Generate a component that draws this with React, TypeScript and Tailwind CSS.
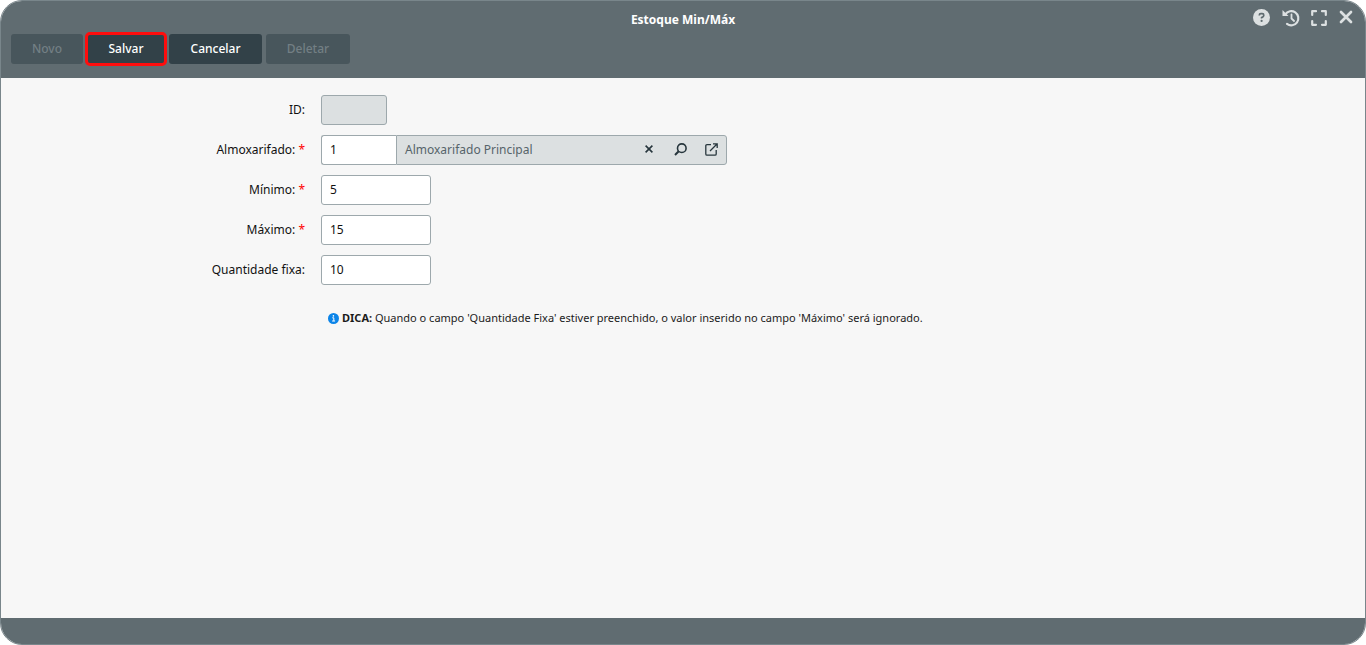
import type { ReactNode } from "react";

function TitleIcon({ label, children }: { label: string; children: ReactNode }) {
  return (
    <button type="button" aria-label={label} className="flex size-5 items-center justify-center text-[#dce0e1]">
      {children}
    </button>
  );
}

const actionBase = "h-[30px] rounded-[3px] text-center text-xs font-medium";
const enabled = "bg-[#324148] text-white";
const disabled = "bg-[#48565c] text-[#737f84]";

function Field({ id, label, required, children }: { id: string; label: string; required?: boolean; children: ReactNode }) {
  return (
    <div className="flex items-center gap-4">
      <label htmlFor={id} className="w-76 shrink-0 text-right text-xs text-[#111111]">
        {label}:{required && <span className="text-[#ff0000]"> *</span>}
      </label>
      {children}
    </div>
  );
}

const inputBase = "h-[30px] border border-[#9da8ac] px-2 pb-0.5 text-xs text-[#111111] outline-none";

export default function App() {
  return (
    <div className="flex min-h-screen flex-col overflow-hidden rounded-[22px] border border-[#79868b] bg-[#f7f7f7] font-['Noto_Sans',sans-serif]">
      <header className="bg-[#606c71] px-[10px] pb-[14px]">
        <div className="grid h-[33px] grid-cols-[1fr_auto_1fr] items-center">
          <h1 className="col-start-2 pt-1 text-xs font-bold text-white">Estoque Min/Máx</h1>
          <div className="flex justify-end gap-2">
            <TitleIcon label="Ajuda">
              <svg viewBox="0 0 17 17" className="size-[17px]">
                <circle cx="8.5" cy="8.5" r="8.5" fill="currentColor" />
                <path d="M6.3 6.5V6.2Q6.3 4.7 7.8 4.7H9.2Q10.8 4.7 10.8 6.3Q10.8 7.3 9.8 7.9L8.6 8.6V9.5" fill="none" stroke="#606c71" strokeWidth="1.7" />
                <circle cx="8.6" cy="11.9" r="1.1" fill="#606c71" />
              </svg>
            </TitleIcon>
            <TitleIcon label="Histórico">
              <svg viewBox="0 0 18 18" className="ml-1 size-[18px] shrink-0" fill="none" stroke="currentColor" strokeWidth="2.2">
                <path d="M3.3 5.3A7.1 7.1 0 1 1 5 14.9" strokeLinecap="round" />
                <path d="M9.5 5.3v4.2l2.6 2.5" strokeWidth="1.8" strokeLinecap="round" />
                <path d="M.5 1v6h6z" fill="currentColor" stroke="none" />
              </svg>
            </TitleIcon>
            <TitleIcon label="Tela cheia">
              <svg viewBox="0 0 16 16" className="ml-1 size-4 shrink-0" fill="none" stroke="currentColor" strokeWidth="2.2">
                <path d="M1.2 5V1.2H5M11 1.2h3.8V5M14.8 11v3.8H11M5 14.8H1.2V11" strokeLinecap="round" strokeLinejoin="round" />
              </svg>
            </TitleIcon>
            <TitleIcon label="Fechar">
              <svg viewBox="0 0 14 14" className="mb-0.5 ml-px size-[14px]" fill="none" stroke="currentColor" strokeWidth="2.7">
                <path d="M2 2l10 10M12 2L2 12" strokeLinecap="round" />
              </svg>
            </TitleIcon>
          </div>
        </div>
        <div className="flex gap-1">
          <button type="button" disabled className={`${actionBase} ${disabled} w-[72px]`}>Novo</button>
          <button type="submit" form="estoque" className={`${actionBase} ${enabled} w-[78px] outline-3 -outline-offset-1 outline-[#ff0d0d]`}>Salvar</button>
          <button type="button" className={`${actionBase} ${enabled} w-[93px]`}>Cancelar</button>
          <button type="button" disabled className={`${actionBase} ${disabled} w-[84px]`}>Deletar</button>
        </div>
      </header>

      <main className="grow py-[17px]">
        <form id="estoque" className="flex flex-col gap-[10px]" onSubmit={(e) => e.preventDefault()}>
          <Field id="codigo" label="ID">
            <input id="codigo" disabled className={`${inputBase} w-[66px] rounded-[3px] bg-[#dce0e1]`} />
          </Field>
          <Field id="almoxarifado" label="Almoxarifado" required>
            <div className="flex">
              <input id="almoxarifado" defaultValue="1" className={`${inputBase} w-[75px] rounded-l-[3px] border-r-0 bg-white`} />
              <div className="flex h-[30px] w-[331px] items-center justify-between rounded-r-[3px] border border-[#9da8ac] bg-[#dce0e1] pr-[7px] pl-2 text-xs text-[#56646a]">
                <span>Almoxarifado Principal</span>
                <span className="flex items-center gap-[15px] pb-0.5 text-[#27363d]">
                  <button type="button" aria-label="Limpar" className="flex size-4 items-center justify-center">
                    <svg viewBox="0 0 8 8" className="size-2" fill="none" stroke="currentColor" strokeWidth="1.6">
                      <path d="M.6.6l6.8 6.8M7.4.6L.6 7.4" />
                    </svg>
                  </button>
                  <button type="button" aria-label="Pesquisar" className="flex size-4 items-center justify-center">
                    <svg viewBox="0 0 13 13" className="size-[13px]" fill="none" stroke="currentColor" strokeWidth="1.6">
                      <circle cx="7.8" cy="5.2" r="4.3" />
                      <path d="M4.7 8.3L1 12" strokeWidth="2" />
                    </svg>
                  </button>
                  <button type="button" aria-label="Abrir cadastro" className="flex size-4 items-center justify-center">
                    <svg viewBox="0 0 13 13" className="size-[13px]" fill="none" stroke="currentColor" strokeWidth="1.3">
                      <path d="M6 1.7H2Q.8 1.7.8 2.9V11Q.8 12.2 2 12.2H10Q11.2 12.2 11.2 11V7M8 .8h4.2V5M12 1L5 8" />
                    </svg>
                  </button>
                </span>
              </div>
            </div>
          </Field>
          <Field id="minimo" label="Mínimo" required>
            <input id="minimo" defaultValue="5" className={`${inputBase} w-[110px] rounded-[3px] bg-white`} />
          </Field>
          <Field id="maximo" label="Máximo" required>
            <input id="maximo" defaultValue="15" className={`${inputBase} w-[110px] rounded-[3px] bg-white`} />
          </Field>
          <Field id="quantidade" label="Quantidade fixa">
            <input id="quantidade" defaultValue="10" className={`${inputBase} w-[110px] rounded-[3px] bg-white`} />
          </Field>
        </form>
        <p className="mt-6 ml-[327px] flex items-center gap-[3px] text-[11px] leading-[18px] text-[#1b1b1b]">
          <svg viewBox="0 0 11 11" className="size-[11px] shrink-0" aria-hidden="true">
            <circle cx="5.5" cy="5.5" r="5.5" fill="#0b84e8" />
            <path d="M4.3 4.8h1.5v3M4.1 8h3" fill="none" stroke="white" strokeWidth="1" />
            <circle cx="5.4" cy="2.9" r=".8" fill="white" />
          </svg>
          <span>
            <strong>DICA:</strong> Quando o campo 'Quantidade Fixa' estiver preenchido, o valor inserido no campo 'Máximo' será ignorado.
          </span>
        </p>
      </main>

      <footer className="h-[26px] bg-[#606c71]" />
    </div>
  );
}
